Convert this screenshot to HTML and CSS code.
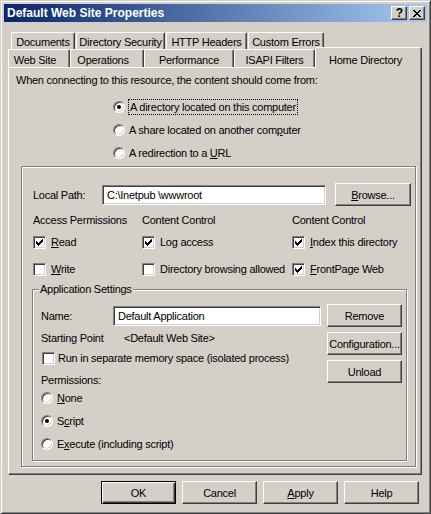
FILE: index.html
```html
<!DOCTYPE html>
<html>
<head>
<meta charset="utf-8">
<link rel="stylesheet" href="styles.css">
</head>
<body>
<div class="window">
  <div class="titlebar">
    <span class="title">Default Web Site Properties</span>
    <div class="tbtns">
      <span class="tbtn help">?</span>
      <span class="tbtn close"><svg width="8" height="7" viewBox="0 0 8 7" shape-rendering="crispEdges"><path d="M0 0h2v1h-2zM6 0h2v1h-2zM1 1h2v1h-2zM5 1h2v1h-2zM2 2h4v1h-4zM3 3h2v1h-2zM2 4h4v1h-4zM1 5h2v1h-2zM5 5h2v1h-2zM0 6h2v1h-2zM6 6h2v1h-2z" fill="#000"/></svg></span>
    </div>
  </div>
  <div class="client">
    <div class="tabs">
      <div class="tabrow back">
        <span class="tab t-doc">Documents</span>
        <span class="tab t-dirsec">Directory Security</span>
        <span class="tab t-http">HTTP Headers</span>
        <span class="tab t-err">Custom Errors</span>
      </div>
      <div class="tabrow front">
        <span class="tab t-web">Web Site</span>
        <span class="tab t-ops">Operations</span>
        <span class="tab t-perf">Performance</span>
        <span class="tab t-isapi">ISAPI Filters</span>
        <span class="tab t-home sel">Home Directory</span>
      </div>
    </div>
    <div class="panel">
      <p class="intro">When connecting to this resource, the content should come from:</p>
      <div class="sources">
        <div class="opt"><span class="radio on"></span><span class="focus">A directory located on this computer</span></div>
        <div class="opt"><span class="radio"></span><span>A share located on another com<u>p</u>uter</span></div>
        <div class="opt"><span class="radio"></span><span>A redirection to a <u>U</u>RL</span></div>
      </div>
      <div class="frame">
        <div class="pathrow">
          <span class="lbl-path">Local Path:</span>
          <span class="edit path">C:\Inetpub \wwwroot</span>
          <span class="btn browse"><span><u>B</u>rowse...</span></span>
        </div>
        <div class="opts">
          <div class="hd">Access Permissions</div>
          <div class="hd">Content Control</div>
          <div class="hd">Content Control</div>
          <div class="chk"><span class="box"><svg width="7" height="7" viewBox="0 0 7 7" shape-rendering="crispEdges"><path d="M0 2h1v3h-1zM1 3h1v3h-1zM2 4h1v3h-1zM3 3h1v3h-1zM4 2h1v3h-1zM5 1h1v3h-1zM6 0h1v3h-1z" fill="#000"/></svg></span><span><u>R</u>ead</span></div>
          <div class="chk"><span class="box"><svg width="7" height="7" viewBox="0 0 7 7" shape-rendering="crispEdges"><path d="M0 2h1v3h-1zM1 3h1v3h-1zM2 4h1v3h-1zM3 3h1v3h-1zM4 2h1v3h-1zM5 1h1v3h-1zM6 0h1v3h-1z" fill="#000"/></svg></span><span>Log access</span></div>
          <div class="chk"><span class="box"><svg width="7" height="7" viewBox="0 0 7 7" shape-rendering="crispEdges"><path d="M0 2h1v3h-1zM1 3h1v3h-1zM2 4h1v3h-1zM3 3h1v3h-1zM4 2h1v3h-1zM5 1h1v3h-1zM6 0h1v3h-1z" fill="#000"/></svg></span><span><u>I</u>ndex this directory</span></div>
          <div class="chk"><span class="box"></span><span><u>W</u>rite</span></div>
          <div class="chk"><span class="box"></span><span>Directory browsing allowed</span></div>
          <div class="chk"><span class="box"><svg width="7" height="7" viewBox="0 0 7 7" shape-rendering="crispEdges"><path d="M0 2h1v3h-1zM1 3h1v3h-1zM2 4h1v3h-1zM3 3h1v3h-1zM4 2h1v3h-1zM5 1h1v3h-1zM6 0h1v3h-1z" fill="#000"/></svg></span><span><u>F</u>rontPage Web</span></div>
        </div>
        <div class="appset">
          <span class="legend">Application Settings</span>
          <div class="app-left">
            <div class="namerow"><span class="lbl-name">Name:</span><span class="edit name">Default Application</span></div>
            <div class="startrow"><span class="lbl-start">Starting Point</span><span>&lt;Default Web Site&gt;</span></div>
            <div class="chk isol"><span class="box"></span><span>Run in separate memory space (isolated process)</span></div>
            <div class="perm">Permissions:</div>
            <div class="opt2"><span class="radio"></span><span><u>N</u>one</span></div>
            <div class="opt2"><span class="radio on"></span><span>S<u>c</u>ript</span></div>
            <div class="opt2"><span class="radio"></span><span>E<u>x</u>ecute (including script)</span></div>
          </div>
          <div class="app-right">
            <span class="btn">Remove</span>
            <span class="btn">Configuration...</span>
            <span class="btn">Unload</span>
          </div>
        </div>
      </div>
    </div>
    <div class="actions">
      <span class="btn act default">OK</span>
      <span class="btn act">Cancel</span>
      <span class="btn act"><span><u>A</u>pply</span></span>
      <span class="btn act">Help</span>
    </div>
  </div>
</div>
</body>
</html>
```
FILE: styles.css
```css
* { box-sizing: border-box; }
html, body { margin: 0; padding: 0; }
body {
  background: #d4d0c8;
  font-family: "Liberation Sans", Arial, sans-serif;
  font-size: 11px;
  letter-spacing: -0.25px;
  color: #000;
}
u { text-decoration: underline; text-underline-offset: 1px; }

.window {
  width: 431px;
  height: 514px;
  border: 1px solid;
  border-color: #d4d0c8 #404040 #404040 #d4d0c8;
  box-shadow: inset 1px 1px #fff, inset -1px -1px #808080;
  padding: 3px;
  background: #d4d0c8;
  display: flex;
  flex-direction: column;
}

.titlebar {
  height: 18px;
  flex: none;
  display: flex;
  align-items: center;
  padding: 0 2px 0 3px;
  background: linear-gradient(to right, #0a246a, #a6caf0);
}
.title {
  color: #fff;
  font-weight: bold;
  font-size: 12px;
  letter-spacing: 0;
}
.tbtns { margin-left: auto; display: flex; gap: 2px; }
.tbtn {
  width: 16px;
  height: 14px;
  display: flex;
  align-items: center;
  justify-content: center;
  background: #d4d0c8;
  border: 1px solid;
  border-color: #fff #404040 #404040 #fff;
  box-shadow: inset -1px -1px #808080;
  font-weight: bold;
  font-size: 12px;
  letter-spacing: 0;
  line-height: 12px;
}
.tbtn.help { padding-left: 1px; }

.client {
  flex: 1;
  padding: 10px 4px 0 4px;
}

.tabrow { display: flex; }
.back { height: 17px; padding-left: 3px; gap: 1px; }
.front { height: 18px; }
.tab {
  height: 18px;
  display: flex;
  align-items: center;
  justify-content: center;
  background: #d4d0c8;
  border-top: 1px solid #fff;
  border-left: 1px solid #fff;
  border-right: 1px solid #404040;
  box-shadow: inset -1px 0 #808080;
  border-radius: 2px 2px 0 0;
  white-space: nowrap;
}
.back .tab { padding-top: 1px; }
.front .tab { padding-top: 2px; }
.t-doc { width: 64px; }
.t-dirsec { width: 89px; }
.t-http { width: 81px; }
.t-err { width: 76px; }
.t-web { width: 62px; padding-right: 8px; }
.t-ops { width: 74px; padding-right: 8px; }
.t-perf { width: 90px; }
.t-isapi { width: 81px; }
.t-home { width: 107px; padding-right: 6px; }
.tab.sel {
  height: 21px;
  margin-top: -2px;
  position: relative;
  z-index: 1;
  padding-top: 3px;
}

.panel {
  width: 414px;
  height: 408px;
  border: 1px solid;
  border-color: #fff #404040 #404040 #fff;
  box-shadow: inset -1px -1px #808080;
  padding: 6px 0 7px 0;
}
.intro {
  margin: 0;
  padding-left: 7px;
  line-height: 13px;
}
.sources {
  margin-top: 8px;
  padding-left: 104px;
}
.opt, .opt2 {
  height: 23px;
  display: flex;
  align-items: center;
  gap: 4px;
}
.focus {
  border: 1px dotted #000;
  margin-left: -1px;
  padding: 0 1px;
  line-height: 14px;
}
.radio {
  width: 12px;
  height: 12px;
  flex: none;
  border-radius: 50%;
  border: 1px solid;
  border-color: #808080 #fff #fff #808080;
  box-shadow: inset 1px 1px #404040, inset -1px -1px #d4d0c8;
  background: #fff;
  display: flex;
  align-items: center;
  justify-content: center;
}
.radio.on::after {
  content: "";
  width: 4px;
  height: 4px;
  border-radius: 50%;
  background: #000;
}

.frame {
  margin: 2px 0 0 12px;
  width: 395px;
  border: 1px solid #808080;
  box-shadow: 1px 1px #fff, inset 1px 1px #fff;
  padding: 16px 3px 5px 11px;
}
.pathrow {
  height: 23px;
  display: flex;
  align-items: center;
}
.lbl-path { width: 69px; }
.edit {
  height: 20px;
  display: flex;
  align-items: center;
  background: #fff;
  border: 1px solid;
  border-color: #808080 #fff #fff #808080;
  box-shadow: inset 1px 1px #404040, inset -1px -1px #d4d0c8;
  padding-left: 4px;
  white-space: nowrap;
}
.edit.path { width: 224px; }
.btn {
  height: 23px;
  display: flex;
  align-items: center;
  justify-content: center;
  background: #d4d0c8;
  border: 1px solid;
  border-color: #fff #404040 #404040 #fff;
  box-shadow: inset -1px -1px #808080;
  white-space: nowrap;
}
.browse { width: 76px; margin-left: 9px; }

.opts {
  margin-top: 8px;
  display: grid;
  grid-template-columns: 109px 150px 1fr;
  grid-template-rows: 12px 22px 22px;
  row-gap: 5px;
  align-items: center;
}
.hd { line-height: 12px; white-space: nowrap; }
.chk {
  display: flex;
  align-items: center;
  gap: 5px;
  white-space: nowrap;
}
.box {
  width: 13px;
  height: 13px;
  flex: none;
  background: #fff;
  border: 1px solid;
  border-color: #808080 #fff #fff #808080;
  box-shadow: inset 1px 1px #404040, inset -1px -1px #d4d0c8;
  display: flex;
  align-items: center;
  justify-content: center;
}
.box svg { display: block; }

.appset {
  position: relative;
  margin: 9px 0 0 -1px;
  width: 375px;
  border: 1px solid #808080;
  box-shadow: 1px 1px #fff, inset 1px 1px #fff;
  padding: 0 4px 5px 8px;
  display: flex;
  gap: 6px;
}
.legend {
  position: absolute;
  top: -7px;
  left: 6px;
  padding: 0 1px;
  line-height: 13px;
  background: #d4d0c8;
}
.app-left {
  width: 280px;
  padding-top: 14px;
  display: flex;
  flex-direction: column;
}
.namerow { height: 24px; display: flex; align-items: center; }
.lbl-name { width: 72px; }
.edit.name { width: 208px; }
.startrow { height: 20px; display: flex; align-items: center; }
.lbl-start { width: 83px; }
.isol { height: 20px; gap: 3px; padding-left: 1px; }
.perm { margin-top: 6px; line-height: 12px; }
.app-right {
  width: 75px;
  padding-top: 14px;
  display: flex;
  flex-direction: column;
  gap: 5px;
}

.actions {
  margin-top: 6px;
  display: flex;
  justify-content: flex-end;
  gap: 6px;
  padding-right: 4px;
}
.act { width: 75px; }
.btn.default {
  border-color: #000;
  box-shadow: inset 1px 1px #fff, inset -1px -1px #404040, inset -2px -2px #808080;
}
```
